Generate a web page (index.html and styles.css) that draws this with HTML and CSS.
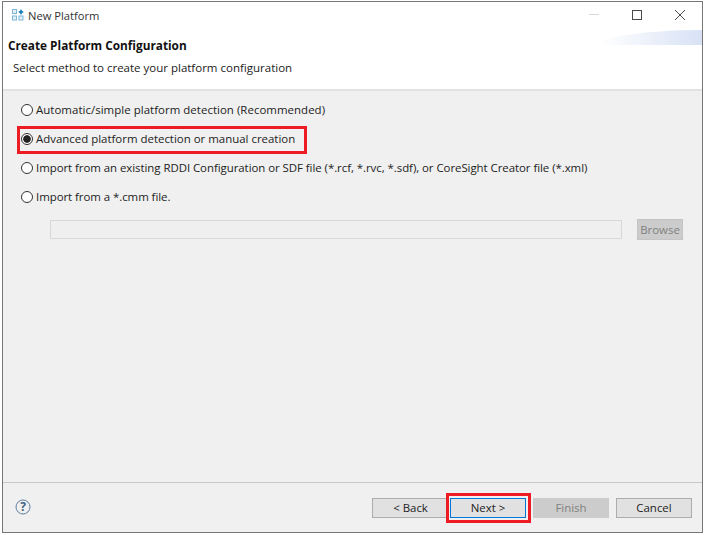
FILE: index.html
```html
<!DOCTYPE html>
<html lang="en">
<head>
<meta charset="utf-8">
<title>New Platform</title>
<link rel="stylesheet" href="styles.css">
</head>
<body>
<div class="window">
  <div class="titlebar">
    <svg class="app-icon" width="12" height="12" viewBox="0 0 12 12">
      <rect x="0.5" y="0.5" width="4" height="4" fill="#e4f1f8" stroke="#7fb6d6"/>
      <rect x="0.5" y="7" width="4" height="4" fill="#e4f1f8" stroke="#7fb6d6"/>
      <rect x="7" y="7" width="4" height="4" fill="#e4f1f8" stroke="#7fb6d6"/>
      <path d="M9 0l1 1.8 1.8 1.2-1.8 1.2-1 1.8-1-1.8-1.8-1.2 1.8-1.2z" fill="#1d7fb4"/>
    </svg>
    <span class="title">New Platform</span>
    <div class="controls">
      <svg class="ctl" width="10" height="10" viewBox="0 0 10 10"><path d="M0 4.5h10" stroke="#d8d8d8" stroke-width="1"/></svg>
      <svg class="ctl" width="10" height="10" viewBox="0 0 10 10"><rect x="0.5" y="0.5" width="9" height="9" fill="none" stroke="#4a4a4a"/></svg>
      <svg class="ctl" width="10" height="10" viewBox="0 0 10 10"><path d="M0 0l10 10M10 0L0 10" stroke="#4a4a4a" stroke-width="1"/></svg>
    </div>
  </div>
  <header class="banner">
    <h1 class="banner-title">Create Platform Configuration</h1>
    <p class="banner-sub">Select method to create your platform configuration</p>
  </header>
  <main class="content">
    <label class="opt opt-wide"><span class="radio"></span>Automatic/simple platform detection (Recommended)</label>
    <label class="opt"><span class="radio checked"></span>Advanced platform detection or manual creation</label>
    <label class="opt opt-tight"><span class="radio"></span>Import from an existing RDDI Configuration or SDF file (*.rcf, *.rvc, *.sdf), or CoreSight Creator file (*.xml)</label>
    <label class="opt opt-tight"><span class="radio"></span>Import from a *.cmm file.</label>
    <div class="file-row">
      <div class="file-input"></div>
      <div class="btn-browse">Browse</div>
    </div>
  </main>
  <footer class="footer">
    <svg class="help" width="16" height="16" viewBox="0 0 16 16">
      <circle cx="8" cy="8" r="7" fill="none" stroke="#5f7f9f" stroke-width="1"/>
      <text x="8" y="12" text-anchor="middle" class="help-q">?</text>
    </svg>
    <div class="buttons">
      <div class="btn btn-back">&lt; Back</div>
      <div class="btn btn-next">Next &gt;</div>
      <div class="btn btn-disabled">Finish</div>
      <div class="btn btn-cancel">Cancel</div>
    </div>
  </footer>
</div>
<div class="mark mark-radio"></div>
<div class="mark mark-next"></div>
</body>
</html>
```
FILE: styles.css
```css
* { box-sizing: border-box; }
html, body { margin: 0; height: 100%; background: #fff; overflow: hidden; }
body { font-family: "Open Sans", "Noto Sans", sans-serif; font-size: 11.45px; color: #1a1a1a; padding: 1px 1px 2px 2px; position: relative; }
.window { height: 532px; width: 701px; border: 1px solid #777; display: flex; flex-direction: column; background: #fff; }
.titlebar { height: 28px; flex: none; display: flex; align-items: center; padding: 0 0 2px 9px; }
.app-icon { margin-right: 4px; }
.title { font-size: 11.2px; color: #333; }
.controls { margin-left: auto; display: flex; gap: 33px; margin-right: 17px; }
.banner { height: 61px; flex: none; border-bottom: 2px solid #e2e2e2; padding-left: 5px; background: #fff; position: relative; }
.banner::after { content: ""; position: absolute; right: 0; top: 0; width: 102px; height: 15px; background: linear-gradient(90deg, #fff 0, #d8e2f5 100%); border-top-left-radius: 100% 100%; }
.banner-title { margin: 6px 0 0; font-size: 11.8px; font-weight: 700; color: #111; line-height: 18px; }
.banner-sub { margin: 5px 0 0 5px; font-size: 11.5px; line-height: 17px; color: #222; }
.content { flex: 1; background: #f0f0f0; padding: 4px 19px 0 18px; border-bottom: 1px solid #c8c8c8; display: flex; flex-direction: column; }
.opt { display: flex; align-items: center; height: 29px; color: #222; white-space: nowrap; }
.opt-wide { letter-spacing: 0.04px; }
.opt-tight { letter-spacing: -0.05px; }
.radio { width: 12px; height: 12px; border: 1px solid #333; border-radius: 50%; background: #fff; margin-right: 3px; flex: none; }
.radio.checked { background: radial-gradient(circle, #222 0, #222 3.4px, #fff 4.2px); }
.file-row { display: flex; align-items: center; gap: 15px; margin: 8px 0 0 29px; }
.file-input { flex: 1; height: 19px; border: 1px solid #d8d8d8; background: #efefef; }
.btn-browse { width: 46px; height: 21px; background: #cccccc; border: 1px solid #c4c4c4; color: #808080; text-align: center; line-height: 19px; }
.footer { height: 49px; flex: none; background: #f0f0f0; display: flex; align-items: flex-start; padding: 15px 10px 0 12px; justify-content: space-between; }
.help { margin-top: 1px; }
.help-q { font-size: 12px; font-weight: 700; fill: #3f6288; }
.buttons { display: flex; gap: 7px; }
.btn { width: 76px; height: 20px; background: #e1e1e1; border: 1px solid #adadad; text-align: center; line-height: 18px; color: #222; }
.btn-back { width: 77px; margin-right: -6px; }
.btn-next { border-color: #0078d7; }
.btn-disabled { background: #cccccc; border-color: #cccccc; color: #808080; }
.mark { position: absolute; border: 3px solid #ed1c24; }
.mark-radio { left: 17px; top: 126px; width: 290px; height: 28px; }
.mark-next { left: 446px; top: 493px; width: 85px; height: 30px; }
```
